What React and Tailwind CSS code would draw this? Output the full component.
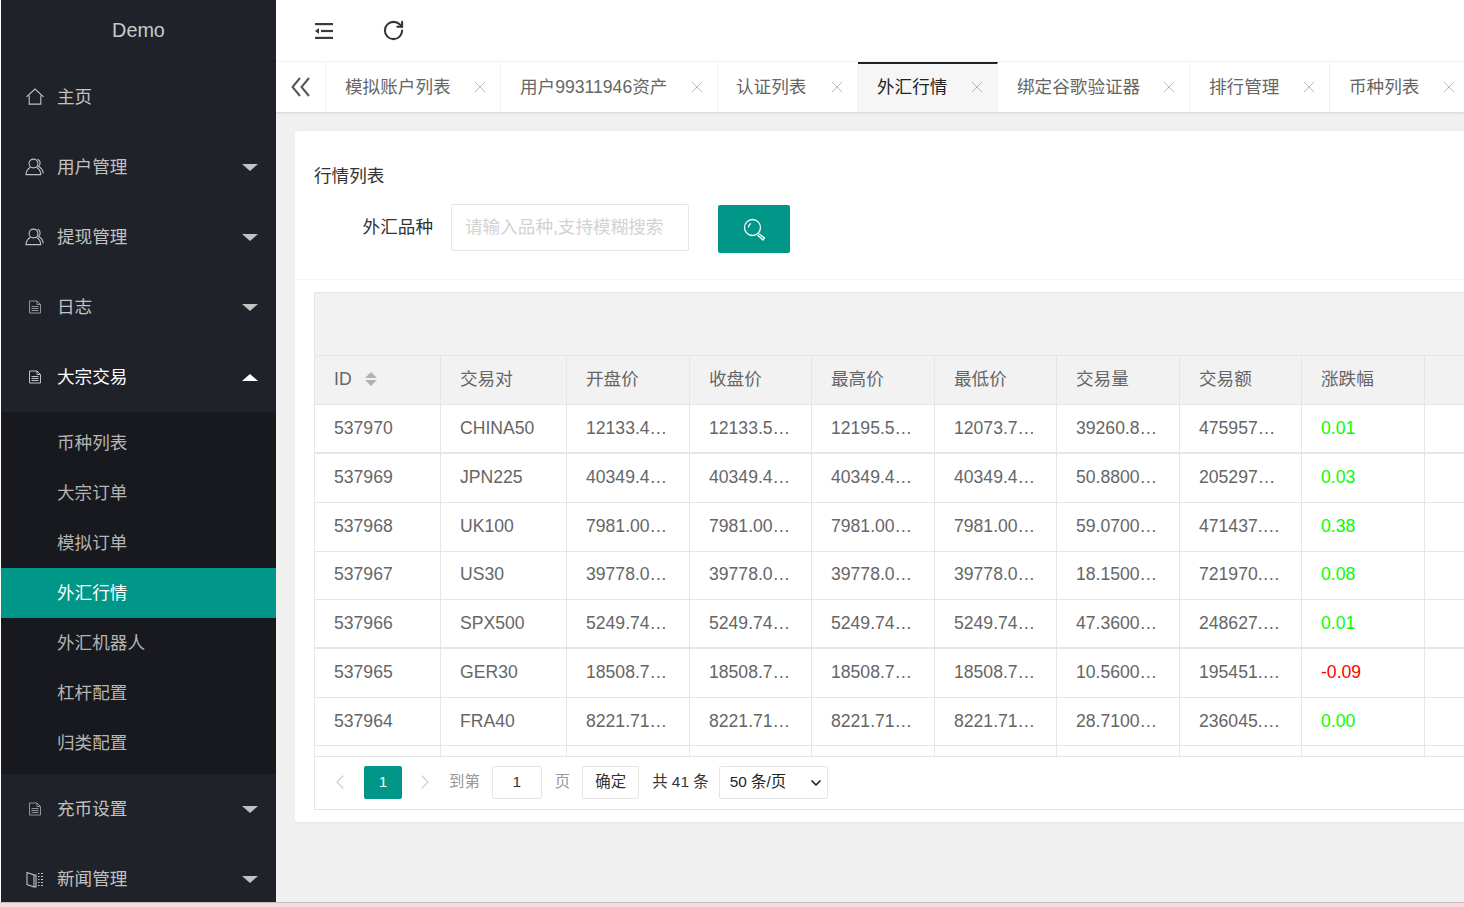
import { RotateCw, ChevronLeft, ChevronRight, ChevronDown, X } from "lucide-react";

const font = "font-['Liberation_Sans','Noto_Sans_CJK_SC',sans-serif]";

function HomeIcon() {
  return (
    <svg width="20" height="20" viewBox="0 0 20 20" fill="none" stroke="currentColor" strokeWidth="1.1">
      <path d="M1.500 9.800 10 2l8.500 7.800M4.200 8.500v8.600h11.600V8.500" />
    </svg>
  );
}

function UserIcon() {
  return (
    <svg width="20" height="20" viewBox="0 0 20 20" fill="none" stroke="currentColor" strokeWidth="1.1">
      <circle cx="8.500" cy="6.500" r="4.400" />
      <path d="M5.500 10.200C3 11.500 1.200 14 1 17.600h14.800c-.2-3.600-2-6-4.400-7.400" />
      <path d="M12.500 2.400c3 .6 3.600 5.200 1 7 2.500 1.200 4.500 3.700 4.800 7" />
    </svg>
  );
}

function DocIcon() {
  return (
    <svg width="14" height="14" viewBox="0 0 14 14" fill="none" stroke="currentColor" strokeWidth="0.9" className="opacity-80">
      <path d="M1.500 1h7.500l3.500 3.500V13h-11zM9 1v3.500h3.500M3.500 6.500h7M3.500 8.500h7M3.500 10.500h7" />
    </svg>
  );
}

function NewsIcon() {
  return (
    <svg width="18" height="18" viewBox="0 0 18 18" fill="none" stroke="currentColor" strokeWidth="1.1">
      <path d="M1 2.500 8 5v12l-7-2.500zM8 5h2v12H8" />
      <path d="M12 3.500h1.500M15 3.500h2M12 6.500h1.500M15 6.500h2M12 9.500h1.500M15 9.500h2M12 12.500h1.500M15 12.500h2M12 15.500h1.500M15 15.500h2" />
    </svg>
  );
}

function ShrinkIcon() {
  return (
    <svg width="20" height="18" viewBox="0 0 20 18" fill="#3a3a3a">
      <rect x="1" y="1" width="18" height="2.200" />
      <rect x="7" y="7.900" width="12" height="2.200" />
      <rect x="1" y="14.800" width="18" height="2.200" />
      <path d="M5 6v6L1 9z" />
    </svg>
  );
}

function DoubleLeftIcon() {
  return (
    <svg width="19" height="20" viewBox="0 0 19 20" fill="none" stroke="currentColor" strokeWidth="2">
      <path d="M9 1 1.500 10 9 19M18 1l-7.500 9 7.500 9" />
    </svg>
  );
}

function SearchIcon() {
  return (
    <svg width="23" height="23" viewBox="0 0 23 23" fill="none" stroke="white" strokeWidth="1.300">
      <circle cx="9.500" cy="9.500" r="8" />
      <path d="M5.500 9.500c0-2 1-3.500 2.500-4" />
      <path d="m15.500 15.500 6 4.500-1.500 2-5.500-5" />
    </svg>
  );
}

function Caret({ up }) {
  return (
    <span
      className={`ml-auto mr-[18px] h-0 w-0 border-x-[8px] border-x-transparent ${
        up ? "border-b-[7px] border-b-white" : "border-t-[7px] border-t-[#c2c2c2]"
      }`}
    />
  );
}

function NavItem({ icon, label, caret, up, active }) {
  return (
    <div className={`flex h-[70px] shrink-0 items-center ${active ? "text-white" : "text-[#c2c2c2]"}`}>
      <span className="flex w-[56px] shrink-0 justify-center pl-[12px] pr-[1px]">{icon}</span>
      <span>{label}</span>
      {caret && <Caret up={up} />}
    </div>
  );
}

const subItems = ["币种列表", "大宗订单", "模拟订单", "外汇行情", "外汇机器人", "杠杆配置", "归类配置"];

function Sidebar() {
  return (
    <aside className="flex w-[275px] shrink-0 flex-col overflow-hidden bg-[#20222a] text-[17.6px]">
      <div className="flex h-[60px] shrink-0 items-center justify-center pt-[1px] text-[19.8px] text-[#c9c9c9] shadow-[0_1px_2px_rgba(0,0,0,0.15)]">
        Demo
      </div>
      <div className="h-[2px] shrink-0" />
      <NavItem icon={<HomeIcon />} label="主页" />
      <NavItem icon={<UserIcon />} label="用户管理" caret />
      <NavItem icon={<UserIcon />} label="提现管理" caret />
      <NavItem icon={<DocIcon />} label="日志" caret />
      <NavItem icon={<DocIcon />} label="大宗交易" caret up active />
      <div className="shrink-0 bg-[#18191e] pt-[6px] pb-[6px]">
        {subItems.map((s) => (
          <div
            key={s}
            className={`flex h-[50px] items-center pl-[56px] ${
              s === "外汇行情" ? "bg-[#009688] text-white" : "text-[#b4b4b4]"
            }`}
          >
            {s}
          </div>
        ))}
      </div>
      <NavItem icon={<DocIcon />} label="充币设置" caret />
      <NavItem icon={<NewsIcon />} label="新闻管理" caret />
    </aside>
  );
}

const tabs = [
  { label: "模拟账户列表", w: "w-[175px] pl-[19px]" },
  { label: "用户99311946资产", w: "w-[217px] pl-[19px]" },
  { label: "认证列表", w: "w-[140px] pl-[18px]" },
  { label: "外汇行情", w: "w-[140px] pl-[19px]", active: true },
  { label: "绑定谷歌验证器", w: "w-[192px] pl-[19px]" },
  { label: "排行管理", w: "w-[140px] pl-[19px]" },
  { label: "币种列表", w: "w-[140px] pl-[19px]" },
];

function Tabs() {
  return (
    <div className="relative z-10 flex h-[51px] shrink-0 border-t border-[#f2f2f2] bg-white text-[17.6px] shadow-[0_1px_2px_rgba(0,0,0,0.12)]">
      <div className="flex w-[50px] shrink-0 items-center justify-center border-r border-[#f0f0f0] text-[#555]">
        <DoubleLeftIcon />
      </div>
      {tabs.map((t) => (
        <div
          key={t.label}
          className={`relative flex ${t.w} shrink-0 items-center border-r border-[#f2f2f2] ${
            t.active ? "border-t-2 border-t-[#20222a] bg-[#f6f6f6] pb-[2px] text-[#222]" : "text-[#666]"
          }`}
        >
          <span>{t.label}</span>
          <X size={20} strokeWidth={1.2} className="absolute right-[10px] text-[#bbb]" />
        </div>
      ))}
    </div>
  );
}

const columns = [
  { label: "交易对", w: "w-[126px]" },
  { label: "开盘价", w: "w-[123px]" },
  { label: "收盘价", w: "w-[122px]" },
  { label: "最高价", w: "w-[123px]" },
  { label: "最低价", w: "w-[122px]" },
  { label: "交易量", w: "w-[123px]" },
  { label: "交易额", w: "w-[122px]" },
  { label: "涨跌幅", w: "w-[123px]" },
];

const rows = [
  { h: "h-[49px] border-b-2", c: ["537970", "CHINA50", "12133.4…", "12133.5…", "12195.5…", "12073.7…", "39260.8…", "475957…", "0.01"] },
  { h: "h-[49px] pb-[2px]", c: ["537969", "JPN225", "40349.4…", "40349.4…", "40349.4…", "40349.4…", "50.8800…", "205297…", "0.03"] },
  { h: "h-[49px] pb-[2px]", c: ["537968", "UK100", "7981.00…", "7981.00…", "7981.00…", "7981.00…", "59.0700…", "471437.…", "0.38"] },
  { h: "h-[48px] pb-[2px]", c: ["537967", "US30", "39778.0…", "39778.0…", "39778.0…", "39778.0…", "18.1500…", "721970.…", "0.08"] },
  { h: "h-[49px] border-b-2", c: ["537966", "SPX500", "5249.74…", "5249.74…", "5249.74…", "5249.74…", "47.3600…", "248627.…", "0.01"] },
  { h: "h-[49px] pb-[2px]", c: ["537965", "GER30", "18508.7…", "18508.7…", "18508.7…", "18508.7…", "10.5600…", "195451.…", "-0.09"] },
  { h: "h-[48px]", c: ["537964", "FRA40", "8221.71…", "8221.71…", "8221.71…", "8221.71…", "28.7100…", "236045.…", "0.00"] },
  { h: "h-[48px]", c: ["", "", "", "", "", "", "", "", ""] },
];

function MarketTable() {
  return (
    <div className="ml-[19px] mt-[12px] w-[1200px] border border-[#e6e6e6] text-[17.6px] text-[#666]">
      <div className="h-[63px] border-b border-[#e6e6e6] bg-[#f2f2f2]" />
      <div className="h-[401px] overflow-hidden border-b border-[#e6e6e6]">
        <table className="w-full table-fixed border-separate border-spacing-0 text-left">
          <thead>
            <tr className="h-[49px] bg-[#f2f2f2]">
              <th className="w-[126px] border-r border-b border-[#e6e6e6] pb-[2px] pl-[19px] font-normal">
                <span className="flex items-center">
                  ID
                  <span className="ml-[13px] flex flex-col gap-[2px]">
                    <span className="h-0 w-0 border-x-[6px] border-b-[6px] border-x-transparent border-b-[#b2b2b2]" />
                    <span className="h-0 w-0 border-x-[6px] border-t-[6px] border-x-transparent border-t-[#b2b2b2]" />
                  </span>
                </span>
              </th>
              {columns.map((c) => (
                <th key={c.label} className={`${c.w} border-r border-b border-[#e6e6e6] pb-[2px] pl-[19px] font-normal`}>
                  {c.label}
                </th>
              ))}
              <th className="border-b border-[#e6e6e6]" />
            </tr>
          </thead>
          <tbody>
            {rows.map((r, i) => (
              <tr key={i}>
                {r.c.map((v, j) => (
                  <td
                    key={j}
                    className={`${r.h} border-r border-b border-[#e6e6e6] pl-[19px] ${
                      j === 8 ? (v.startsWith("-") ? "text-[#ff0000]" : "text-[#00ff00]") : ""
                    }`}
                  >
                    {v}
                  </td>
                ))}
                <td className={`${r.h} border-b border-[#e6e6e6]`} />
              </tr>
            ))}
          </tbody>
        </table>
      </div>
      <div className="flex h-[52px] items-center pb-[2px] pl-[13px] text-[15.4px]">
        <ChevronLeft size={24} strokeWidth={1.4} className="text-[#d2d2d2]" />
        <span className="ml-[12px] flex h-[33px] w-[38px] items-center justify-center rounded-[2px] bg-[#009688] text-white">
          1
        </span>
        <ChevronRight size={24} strokeWidth={1.4} className="ml-[11px] text-[#d2d2d2]" />
        <span className="ml-[12px] text-[#999]">到第</span>
        <input
          defaultValue="1"
          className="ml-[12px] h-[33px] w-[50px] rounded-[2px] border border-[#e6e6e6] text-center text-[#333] outline-none"
        />
        <span className="ml-[13px] text-[#999]">页</span>
        <button className="ml-[12px] h-[33px] w-[57px] rounded-[2px] border border-[#e6e6e6] bg-white text-[#333]">
          确定
        </button>
        <span className="ml-[13px] text-[#333]">共 41 条</span>
        <span className="relative ml-[10px] flex">
          <select
            defaultValue="50"
            className="h-[33px] w-[109px] appearance-none rounded-[2px] border border-[#e6e6e6] bg-white pl-[10px] text-[#222] outline-none"
          >
            <option value="50">50 条/页</option>
          </select>
          <ChevronDown size={16} strokeWidth={2.6} className="absolute right-[4px] top-[9px] text-[#222]" />
        </span>
      </div>
    </div>
  );
}

export default function App() {
  return (
    <div className={`${font} flex h-[907px] w-[1464px] flex-col overflow-hidden bg-[#f4dcdc]`}>
      <div className="flex h-[903px] shrink-0 border-b border-[#d0baba] bg-white pl-[1px]">
        <Sidebar />
        <main className="flex min-w-0 flex-1 flex-col bg-[#f0f0f0]">
          <div className="flex h-[61px] shrink-0 items-center gap-[48px] bg-white pl-[38px] text-[#333]">
            <ShrinkIcon />
            <RotateCw size={23} strokeWidth={2.1} />
          </div>
          <Tabs />
          <div className="min-h-0 flex-1 overflow-hidden pl-[19px] pt-[19px]">
            <section className="h-[691px] w-[1300px] rounded-[2px] bg-white shadow-[0_1px_2px_rgba(0,0,0,0.05)]">
              <div className="h-[149px] border-b border-[#f6f6f6] pl-[19px]">
                <div className="pt-[33px] text-[17.6px] leading-[24px] text-[#333]">行情列表</div>
                <div className="mt-[16px] flex text-[17.6px]">
                  <label className="flex h-[47px] w-[119px] items-center justify-end text-[#333]">外汇品种</label>
                  <input
                    placeholder="请输入品种,支持模糊搜索"
                    className="ml-[18px] h-[47px] w-[238px] rounded-[2px] border border-[#e6e6e6] pl-[13px] outline-none placeholder:text-[#d2d2d2]"
                  />
                  <button className="ml-[29px] mt-[1px] flex h-[48px] w-[72px] items-center justify-center rounded-[2px] bg-[#009688]">
                    <SearchIcon />
                  </button>
                </div>
              </div>
              <MarketTable />
            </section>
          </div>
        </main>
      </div>
    </div>
  );
}
